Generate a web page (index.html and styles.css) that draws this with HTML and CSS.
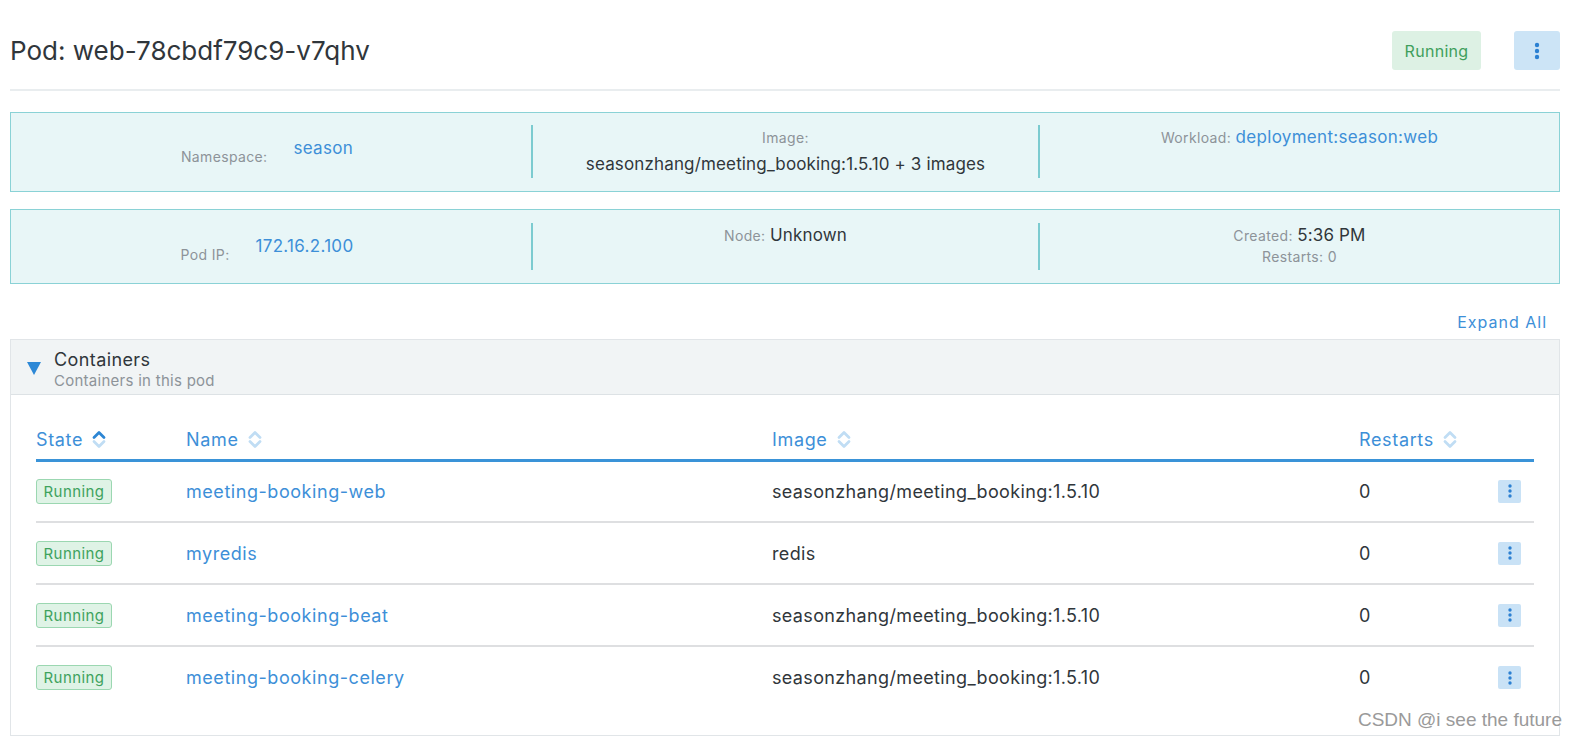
FILE: index.html
```html
<!DOCTYPE html>
<html lang="en">
<head>
<meta charset="utf-8">
<title>Pod: web-78cbdf79c9-v7qhv</title>
<link rel="stylesheet" href="styles.css">
</head>
<body>
<div class="page">
  <header class="head">
    <h1 class="title">Pod: web-78cbdf79c9-v7qhv</h1>
    <div class="head-actions">
      <span class="state-lg">Running</span>
      <button class="menu-lg" type="button" aria-label="More actions">
        <svg width="6" height="18" viewBox="0 0 6 18"><circle cx="3" cy="3" r="2.2"/><circle cx="3" cy="9" r="2.2"/><circle cx="3" cy="15" r="2.2"/></svg>
      </button>
    </div>
  </header>

  <section class="box box-1">
    <div class="col">
      <div class="split">
        <span class="lbl split-lbl">Namespace:</span>
        <a class="link split-val">season</a>
      </div>
    </div>
    <div class="col">
      <div class="line"><span class="lbl">Image:</span></div>
      <div class="line line-val"><span class="val">seasonzhang/meeting_booking:1.5.10 + 3 images</span></div>
    </div>
    <div class="col">
      <div class="line"><span class="lbl">Workload:</span> <a class="link">deployment:season:web</a></div>
    </div>
  </section>

  <section class="box box-2">
    <div class="col">
      <div class="split">
        <span class="lbl split-lbl">Pod IP:</span>
        <a class="link split-val">172.16.2.100</a>
      </div>
    </div>
    <div class="col">
      <div class="line"><span class="lbl">Node:</span> <span class="val">Unknown</span></div>
    </div>
    <div class="col">
      <div class="line"><span class="lbl">Created:</span> <span class="val">5:36 PM</span></div>
      <div class="line-sm"><span class="lbl">Restarts: 0</span></div>
    </div>
  </section>

  <div class="expand-row"><a class="expand">Expand All</a></div>

  <section class="panel">
    <div class="panel-head">
      <span class="caret"></span>
      <div>
        <div class="panel-title">Containers</div>
        <div class="panel-sub">Containers in this pod</div>
      </div>
    </div>
    <div class="panel-body">
      <table class="grid">
        <colgroup>
          <col class="c-state"><col class="c-name"><col class="c-image"><col class="c-restarts"><col class="c-act">
        </colgroup>
        <thead>
          <tr>
            <th><span class="th-in">State <svg class="sort" width="14" height="19" viewBox="0 0 14 19"><path class="on" d="M2 7.5 L7 2.5 L12 7.5"/><path d="M2 11.5 L7 16.5 L12 11.5"/></svg></span></th>
            <th><span class="th-in">Name <svg class="sort" width="14" height="19" viewBox="0 0 14 19"><path d="M2 7.5 L7 2.5 L12 7.5"/><path d="M2 11.5 L7 16.5 L12 11.5"/></svg></span></th>
            <th><span class="th-in">Image <svg class="sort" width="14" height="19" viewBox="0 0 14 19"><path d="M2 7.5 L7 2.5 L12 7.5"/><path d="M2 11.5 L7 16.5 L12 11.5"/></svg></span></th>
            <th><span class="th-in">Restarts <svg class="sort" width="14" height="19" viewBox="0 0 14 19"><path d="M2 7.5 L7 2.5 L12 7.5"/><path d="M2 11.5 L7 16.5 L12 11.5"/></svg></span></th>
            <th></th>
          </tr>
        </thead>
        <tbody>
          <tr>
            <td><span class="badge">Running</span></td>
            <td><a class="link name">meeting-booking-web</a></td>
            <td class="img">seasonzhang/meeting_booking:1.5.10</td>
            <td class="num">0</td>
            <td class="act"><button class="menu-sm" type="button" aria-label="Actions"><svg width="4" height="14" viewBox="0 0 4 14"><circle cx="2" cy="2" r="1.7"/><circle cx="2" cy="7" r="1.7"/><circle cx="2" cy="12" r="1.7"/></svg></button></td>
          </tr>
          <tr>
            <td><span class="badge">Running</span></td>
            <td><a class="link name">myredis</a></td>
            <td class="img">redis</td>
            <td class="num">0</td>
            <td class="act"><button class="menu-sm" type="button" aria-label="Actions"><svg width="4" height="14" viewBox="0 0 4 14"><circle cx="2" cy="2" r="1.7"/><circle cx="2" cy="7" r="1.7"/><circle cx="2" cy="12" r="1.7"/></svg></button></td>
          </tr>
          <tr>
            <td><span class="badge">Running</span></td>
            <td><a class="link name">meeting-booking-beat</a></td>
            <td class="img">seasonzhang/meeting_booking:1.5.10</td>
            <td class="num">0</td>
            <td class="act"><button class="menu-sm" type="button" aria-label="Actions"><svg width="4" height="14" viewBox="0 0 4 14"><circle cx="2" cy="2" r="1.7"/><circle cx="2" cy="7" r="1.7"/><circle cx="2" cy="12" r="1.7"/></svg></button></td>
          </tr>
          <tr>
            <td><span class="badge">Running</span></td>
            <td><a class="link name">meeting-booking-celery</a></td>
            <td class="img">seasonzhang/meeting_booking:1.5.10</td>
            <td class="num">0</td>
            <td class="act"><button class="menu-sm" type="button" aria-label="Actions"><svg width="4" height="14" viewBox="0 0 4 14"><circle cx="2" cy="2" r="1.7"/><circle cx="2" cy="7" r="1.7"/><circle cx="2" cy="12" r="1.7"/></svg></button></td>
          </tr>
        </tbody>
      </table>
    </div>
  </section>
</div>
<div class="watermark">CSDN @i see the future</div>
</body>
</html>
```

FILE: styles.css
```css
* { box-sizing: border-box; }

html, body {
  margin: 0;
  background: #ffffff;
}

body {
  font-family: Inter, "Noto Sans", sans-serif;
  color: #2f3439;
  overflow: hidden;
}

.page {
  padding: 0 18px 0 10px;
}

/* header */
.head {
  display: flex;
  align-items: center;
  justify-content: space-between;
  padding: 31px 0 19px;
  border-bottom: 2px solid #e9edef;
}

.title {
  margin: 0;
  font-size: 26px;
  font-weight: 400;
  line-height: 39px;
  color: #30363b;
}

.head-actions {
  display: flex;
  gap: 33px;
}

.state-lg {
  width: 89px;
  height: 39px;
  display: flex;
  align-items: center;
  justify-content: center;
  background: #ddf1e4;
  color: #3f9f5c;
  border-radius: 3px;
  font-size: 16px;
  letter-spacing: 0.3px;
}

.menu-lg {
  width: 46px;
  height: 39px;
  border: 0;
  padding: 0;
  border-radius: 3px;
  background: #cce4f6;
  display: flex;
  align-items: center;
  justify-content: center;
}

.menu-lg svg, .menu-sm svg { fill: #2b80d2; }

/* info boxes */
.box {
  display: grid;
  grid-template-columns: 520px 507px 1fr;
  border: 1px solid #8ad2d6;
  background: #e8f6f7;
  padding: 12px 0 13px;
  margin-top: 21px;
}

.box-2 { margin-top: 17px; padding-top: 13px; }

.col {
  text-align: center;
}

.col + .col { border-left: 2px solid #7ccbd0; }

.box-1 .col { min-height: 53px; }
.box-2 .col { min-height: 47px; }

.lbl {
  font-size: 14px;
  letter-spacing: 0.35px;
  color: #8d9399;
}

.link {
  color: #3d8fd8;
  font-size: 17px;
  letter-spacing: 0.3px;
  text-decoration: none;
}

.val {
  font-size: 17px;
  letter-spacing: 0.15px;
  color: #30363b;
}

.line {
  line-height: 24px;
}

.line-val { margin-top: 2px; }

.line-sm { line-height: 16px; }

.split {
  display: flex;
  justify-content: center;
  align-items: flex-start;
  gap: 26px;
  padding-right: 8px;
}

.split-lbl { margin-top: 22px; line-height: 20px; }
.split-val { margin-top: 11px; line-height: 24px; }

/* expand */
.expand-row {
  display: flex;
  justify-content: flex-end;
  padding-right: 13px;
  margin-top: 26px;
  margin-bottom: 5px;
}

.expand {
  color: #3d8fd8;
  font-size: 16px;
  line-height: 24px;
  letter-spacing: 1px;
}

/* panel */
.panel {
  border: 1px solid #e1e5e8;
}

.panel-head {
  display: flex;
  align-items: flex-start;
  gap: 13px;
  background: #f1f4f5;
  border-bottom: 1px solid #dde2e5;
  padding: 10px 0 4px 16px;
  height: 55px;
}

.caret {
  width: 0;
  height: 0;
  border-left: 7.5px solid transparent;
  border-right: 7.5px solid transparent;
  border-top: 13px solid #2d88d6;
  margin-top: 12px;
}

.panel-title {
  font-size: 18px;
  letter-spacing: 0.4px;
  line-height: 20px;
  color: #30363b;
}

.panel-sub {
  font-size: 15px;
  letter-spacing: 0.27px;
  line-height: 18px;
  margin-top: 2px;
  color: #8d9399;
}

.panel-body {
  padding: 25px 25px 27px;
}

.grid {
  width: 100%;
  border-collapse: collapse;
  table-layout: fixed;
}

.c-state { width: 150px; }
.c-name { width: 586px; }
.c-image { width: 587px; }
.c-restarts { width: 138px; }

.grid th {
  text-align: left;
  font-weight: 400;
  font-size: 18px;
  letter-spacing: 0.65px;
  color: #3d8fd8;
  height: 40px;
  padding: 0;
  border-bottom: 3px solid #3a93d8;
  vertical-align: middle;
}

.th-in {
  display: inline-flex;
  align-items: center;
  gap: 9px;
}

.sort path {
  fill: none;
  stroke: #c0ddf4;
  stroke-width: 2.8;
  stroke-linecap: round;
  stroke-linejoin: round;
}

.sort path.on { stroke: #2d86d4; }

.grid td {
  height: 62px;
  padding: 0;
  border-bottom: 2px solid #dedfe1;
  vertical-align: middle;
}

.grid tbody tr:last-child td { border-bottom: 0; }

.badge {
  display: inline-flex;
  align-items: center;
  justify-content: center;
  width: 76px;
  height: 25px;
  background: #dff3e6;
  border: 1px solid #9bd7b1;
  border-radius: 3px;
  color: #3ea25d;
  font-size: 15px;
  letter-spacing: 0.44px;
}

.name {
  font-size: 18px;
  letter-spacing: 0.55px;
}

.img {
  font-size: 18px;
  letter-spacing: 0.35px;
  color: #30363b;
}

.num {
  font-size: 18px;
  color: #30363b;
}

.act { text-align: right; padding-right: 13px !important; }

.menu-sm {
  width: 23px;
  height: 23px;
  border: 0;
  padding: 0;
  border-radius: 2px;
  background: #c9e2f6;
  display: inline-flex;
  align-items: center;
  justify-content: center;
  vertical-align: middle;
}

.watermark {
  position: absolute;
  right: 16px;
  bottom: 5px;
  font-family: "Liberation Sans", Arial, sans-serif;
  font-size: 19px;
  color: #9a9a9a;
  text-shadow: 0 0 2px #ffffff;
}
```
